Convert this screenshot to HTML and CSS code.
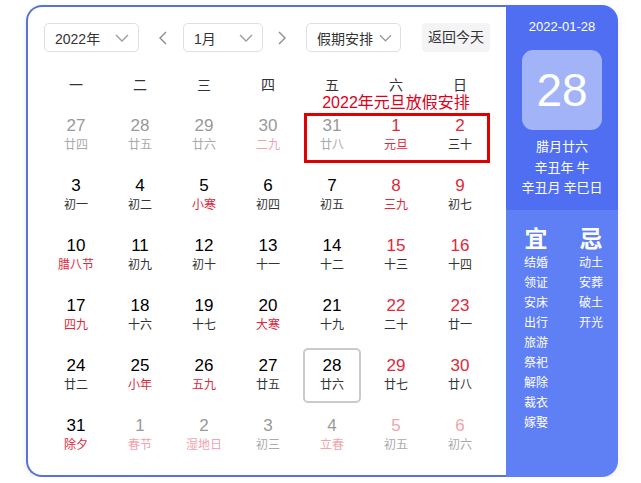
FILE: index.html
```html
<!DOCTYPE html>
<html lang="zh-CN">
<head>
<meta charset="utf-8">
<title>万年历</title>
<link rel="stylesheet" href="styles.css">
</head>
<body>
<div class="calendar">
  <div class="main">
    <div class="toolbar">
      <div class="select sel-year"><span>2022年</span><svg class="chev" viewBox="0 0 14 8" width="14" height="8"><path d="M1 1 L7 7 L13 1" fill="none" stroke="#9a9a9a" stroke-width="1.3"/></svg></div>
      <svg class="nav nav-prev" viewBox="0 0 8 14" width="8" height="14"><path d="M7 1 L1 7 L7 13" fill="none" stroke="#8a8a8a" stroke-width="1.4"/></svg>
      <div class="select sel-month"><span>1月</span><svg class="chev" viewBox="0 0 14 8" width="14" height="8"><path d="M1 1 L7 7 L13 1" fill="none" stroke="#9a9a9a" stroke-width="1.3"/></svg></div>
      <svg class="nav nav-next" viewBox="0 0 8 14" width="8" height="14"><path d="M1 1 L7 7 L1 13" fill="none" stroke="#8a8a8a" stroke-width="1.4"/></svg>
      <div class="select sel-holiday"><span>假期安排</span><svg class="chev" viewBox="0 0 14 8" width="13" height="8"><path d="M1 1 L7 7 L13 1" fill="none" stroke="#9a9a9a" stroke-width="1.3"/></svg></div>
      <div class="today-btn">返回今天</div>
    </div>
    <div class="grid">
      <div class="wk">一</div><div class="wk">二</div><div class="wk">三</div><div class="wk">四</div><div class="wk">五</div><div class="wk">六</div><div class="wk">日</div>

      <div class="cell"><div class="day other"><b>27</b><i>廿四</i></div></div>
      <div class="cell"><div class="day other"><b>28</b><i>廿五</i></div></div>
      <div class="cell"><div class="day other"><b>29</b><i>廿六</i></div></div>
      <div class="cell"><div class="day other"><b>30</b><i class="fest">二九</i></div></div>
      <div class="cell"><div class="day other"><b>31</b><i>廿八</i></div></div>
      <div class="cell"><div class="day weekend"><b>1</b><i class="fest">元旦</i></div></div>
      <div class="cell"><div class="day weekend"><b>2</b><i>三十</i></div></div>

      <div class="cell"><div class="day"><b>3</b><i>初一</i></div></div>
      <div class="cell"><div class="day"><b>4</b><i>初二</i></div></div>
      <div class="cell"><div class="day"><b>5</b><i class="fest">小寒</i></div></div>
      <div class="cell"><div class="day"><b>6</b><i>初四</i></div></div>
      <div class="cell"><div class="day"><b>7</b><i>初五</i></div></div>
      <div class="cell"><div class="day weekend"><b>8</b><i class="fest">三九</i></div></div>
      <div class="cell"><div class="day weekend"><b>9</b><i>初七</i></div></div>

      <div class="cell"><div class="day"><b>10</b><i class="fest">腊八节</i></div></div>
      <div class="cell"><div class="day"><b>11</b><i>初九</i></div></div>
      <div class="cell"><div class="day"><b>12</b><i>初十</i></div></div>
      <div class="cell"><div class="day"><b>13</b><i>十一</i></div></div>
      <div class="cell"><div class="day"><b>14</b><i>十二</i></div></div>
      <div class="cell"><div class="day weekend"><b>15</b><i>十三</i></div></div>
      <div class="cell"><div class="day weekend"><b>16</b><i>十四</i></div></div>

      <div class="cell"><div class="day"><b>17</b><i class="fest">四九</i></div></div>
      <div class="cell"><div class="day"><b>18</b><i>十六</i></div></div>
      <div class="cell"><div class="day"><b>19</b><i>十七</i></div></div>
      <div class="cell"><div class="day"><b>20</b><i class="fest">大寒</i></div></div>
      <div class="cell"><div class="day"><b>21</b><i>十九</i></div></div>
      <div class="cell"><div class="day weekend"><b>22</b><i>二十</i></div></div>
      <div class="cell"><div class="day weekend"><b>23</b><i>廿一</i></div></div>

      <div class="cell"><div class="day"><b>24</b><i>廿二</i></div></div>
      <div class="cell"><div class="day"><b>25</b><i class="fest">小年</i></div></div>
      <div class="cell"><div class="day"><b>26</b><i class="fest">五九</i></div></div>
      <div class="cell"><div class="day"><b>27</b><i>廿五</i></div></div>
      <div class="cell"><div class="day today"><b>28</b><i>廿六</i></div></div>
      <div class="cell"><div class="day weekend"><b>29</b><i>廿七</i></div></div>
      <div class="cell"><div class="day weekend"><b>30</b><i>廿八</i></div></div>

      <div class="cell"><div class="day"><b>31</b><i class="fest">除夕</i></div></div>
      <div class="cell"><div class="day other"><b>1</b><i class="fest">春节</i></div></div>
      <div class="cell"><div class="day other"><b>2</b><i class="fest">湿地日</i></div></div>
      <div class="cell"><div class="day other"><b>3</b><i>初三</i></div></div>
      <div class="cell"><div class="day other"><b>4</b><i class="fest">立春</i></div></div>
      <div class="cell"><div class="day other weekend"><b>5</b><i>初五</i></div></div>
      <div class="cell"><div class="day other weekend"><b>6</b><i>初六</i></div></div>

      <div class="holiday-label">2022年元旦放假安排</div>
      <div class="holiday-box"></div>
    </div>
  </div>
  <div class="side">
    <div class="side-top">
      <div class="side-date">2022-01-28</div>
      <div class="big-day">28</div>
      <div class="lunar">
        <div>腊月廿六</div>
        <div>辛丑年 牛</div>
        <div>辛丑月 辛巳日</div>
      </div>
    </div>
    <div class="side-bottom">
      <div class="yj-col">
        <div class="yj-title">宜</div>
        <div>结婚</div><div>领证</div><div>安床</div><div>出行</div><div>旅游</div><div>祭祀</div><div>解除</div><div>裁衣</div><div>嫁娶</div>
      </div>
      <div class="yj-col">
        <div class="yj-title">忌</div>
        <div>动土</div><div>安葬</div><div>破土</div><div>开光</div>
      </div>
    </div>
  </div>
</div>
</body>
</html>
```

FILE: styles.css
```css
* { box-sizing: border-box; }
html, body { margin: 0; padding: 0; background: #fff; }
body {
  font-family: "Liberation Sans", "Noto Sans CJK SC", sans-serif;
  color: #333;
}
.calendar {
  display: flex;
  width: 592px;
  height: 472px;
  margin: 5px 0 0 26px;
  border-radius: 16px;
  box-shadow: 0 2px 6px rgba(0, 0, 0, 0.08);
}
.main {
  width: 480px;
  height: 472px;
  border: 2px solid #5773d9;
  border-right: none;
  border-radius: 16px 0 0 16px;
  padding: 16px 0 10px 16px;
  background: #fff;
}
.toolbar {
  display: flex;
  align-items: center;
  height: 29px;
}
.select {
  display: flex;
  align-items: center;
  justify-content: space-between;
  height: 29px;
  border: 1px solid #dcdfe6;
  border-radius: 5px;
  padding: 0 9px 0 10px;
  font-size: 14px;
  color: #333;
}
.sel-year { width: 95px; }
.sel-month { width: 80px; }
.sel-holiday { width: 95px; padding: 0 8px 0 10px; }
.chev { display: block; flex: none; }
.nav { display: block; flex: none; }
.nav-prev { margin: 0 16px 0 20px; }
.nav-next { margin: 0 20px 0 15px; }
.today-btn {
  margin-left: 21px;
  width: 68px;
  height: 29px;
  line-height: 29px;
  text-align: center;
  background: #f4f4f6;
  border-radius: 4px;
  font-size: 14px;
  color: #333;
}
.grid {
  position: relative;
  margin-top: 13px;
  display: grid;
  grid-template-columns: repeat(7, 64px);
  grid-template-rows: 40px repeat(6, 60px);
}
.wk {
  display: flex;
  align-items: center;
  justify-content: center;
  font-size: 14px;
  line-height: 16px;
  color: #333;
}
.cell {
  display: flex;
  align-items: center;
  justify-content: center;
}
.day {
  width: 58px;
  height: 55px;
  display: flex;
  flex-direction: column;
  align-items: center;
  justify-content: center;
  padding-bottom: 2px;
  border: 2px solid transparent;
  border-radius: 5px;
}
.day b {
  font-weight: normal;
  font-size: 17px;
  line-height: 20px;
  color: #000;
}
.day i {
  font-style: normal;
  font-size: 12px;
  line-height: 16px;
  color: #333;
  font-family: "Noto Sans CJK SC", sans-serif;
}
.day i.fest { color: #e0283a; }
.day.weekend b { color: #e0283a; }
.day.other b { color: #999; }
.day.other i { color: #aaa; }
.day.other i.fest { color: #f2a3ad; }
.day.other.weekend b { color: #f2a3ad; }
.day.today { border-color: #c9c9ce; }
.holiday-label {
  position: absolute;
  left: 256px;
  top: 28.5px;
  width: 192px;
  text-align: center;
  font-size: 16px;
  line-height: 17px;
  color: #e0001a;
}
.holiday-box {
  position: absolute;
  left: 260px;
  top: 48px;
  width: 186px;
  height: 50px;
  border: 3px solid #e00000;
}
.side {
  width: 112px;
  height: 472px;
  display: flex;
  flex-direction: column;
  border-radius: 0 16px 16px 0;
  overflow: hidden;
  color: #fff;
}
.side-top {
  height: 205px;
  background: #4f6ef2;
  display: flex;
  flex-direction: column;
  align-items: center;
  padding-top: 12px;
}
.side-date {
  font-size: 13px;
  line-height: 20px;
}
.big-day {
  margin-top: 13px;
  width: 80px;
  height: 80px;
  border-radius: 11px;
  background: #a2b3f7;
  display: flex;
  align-items: center;
  justify-content: center;
  font-size: 46px;
  color: #fff;
}
.lunar {
  margin-top: 6px;
  text-align: center;
  font-size: 13px;
  line-height: 20.5px;
  font-family: "Noto Sans CJK SC", sans-serif;
}
.side-bottom {
  flex: 1;
  background: #5f7ff5;
  display: flex;
  padding: 13px 0 0 10px;
  gap: 15px;
}
.yj-col {
  width: 40px;
  text-align: center;
  font-size: 12px;
  line-height: 20px;
  font-family: "Noto Sans CJK SC", sans-serif;
}
.yj-title {
  font-size: 23px;
  line-height: 28px;
  font-weight: bold;
  margin-bottom: 1px;
}
```
